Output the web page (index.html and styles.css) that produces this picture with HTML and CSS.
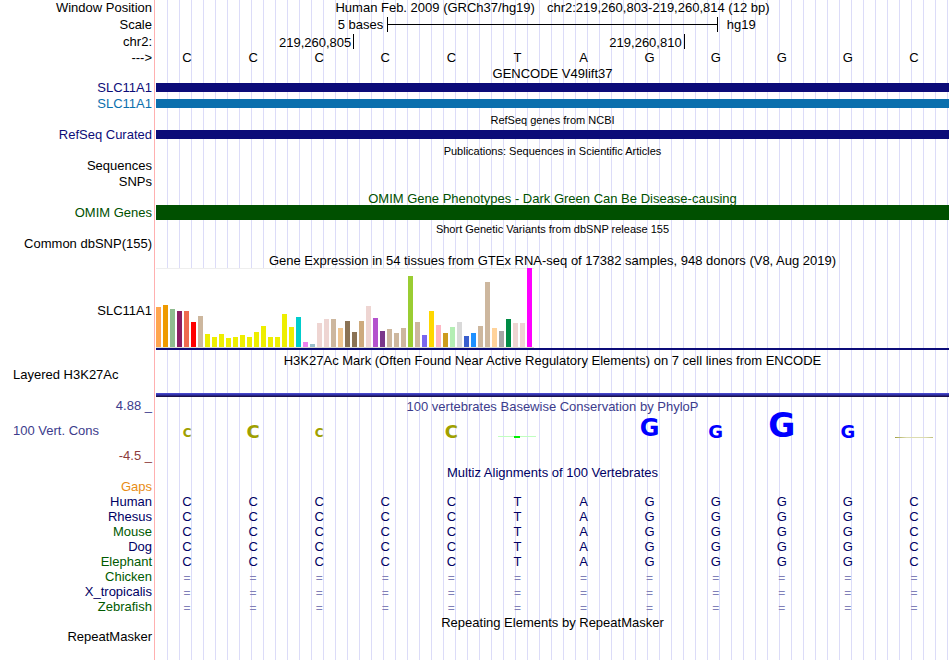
FILE: index.html
```html
<!DOCTYPE html>
<html lang="en">
  <head>
    <meta charset="UTF-8" />
    <meta name="viewport" content="width=device-width, initial-scale=1.0" />
    <title>chr2:219,260,803-219,260,814</title>
    <link rel="stylesheet" href="styles.css" />
  </head>
  <body>
    <main class="browser">
      <!-- Position and ruler -->
      <div class="row">
        <span class="label">Window Position</span>
        <h1 class="position">
          <span>Human Feb. 2009 (GRCh37/hg19)</span>
          <span>chr2:219,260,803-219,260,814 (12 bp)</span>
        </h1>
      </div>
      <div class="row ruler-row">
        <span class="label">Scale</span>
        <div class="scale">
          <span class="scale-size">5 bases</span>
          <span class="scale-bar"></span>
          <span class="scale-db">hg19</span>
        </div>
      </div>
      <div class="row ruler-row">
        <span class="label">chr2:</span>
        <div class="ticks">
          <span class="tick">219,260,805</span>
          <span class="tick">219,260,810</span>
        </div>
      </div>
      <div class="row line-row">
        <span class="label">---&gt;</span>
        <div class="bases" data-seq="CCCCCTAGGGGC"></div>
      </div>

      <!-- Genes -->
      <h2 class="title">GENCODE V49lift37</h2>
      <div class="row navy">
        <span class="label">SLC11A1</span>
        <div class="gene"></div>
      </div>
      <div class="row blue">
        <span class="label">SLC11A1</span>
        <div class="gene"></div>
      </div>
      <h2 class="title small">RefSeq genes from NCBI</h2>
      <div class="row navy">
        <span class="label">RefSeq Curated</span>
        <div class="gene"></div>
      </div>

      <!-- Publications -->
      <h2 class="title small">Publications: Sequences in Scientific Articles</h2>
      <div class="row"><span class="label">Sequences</span></div>
      <div class="row"><span class="label">SNPs</span></div>

      <!-- Phenotypes and variants -->
      <h2 class="title omim">OMIM Gene Phenotypes - Dark Green Can Be Disease-causing</h2>
      <div class="row omim">
        <span class="label">OMIM Genes</span>
        <div class="gene tall"></div>
      </div>
      <h2 class="title small">Short Genetic Variants from dbSNP release 155</h2>
      <div class="row"><span class="label">Common dbSNP(155)</span></div>

      <!-- GTEx expression -->
      <h2 class="title">
        Gene Expression in 54 tissues from GTEx RNA-seq of 17382 samples, 948 donors (V8, Aug 2019)
      </h2>
      <div class="row gtex-row">
        <span class="label">SLC11A1</span>
        <div class="gtex">
          <div class="chart"></div>
        </div>
      </div>

      <!-- Regulation -->
      <h2 class="title">
        H3K27Ac Mark (Often Found Near Active Regulatory Elements) on 7 cell lines from ENCODE
      </h2>
      <div class="row h3k-row">
        <span class="label left">Layered H3K27Ac</span>
        <div class="signal"></div>
      </div>

      <!-- Conservation -->
      <div class="row line-row cons">
        <span class="label">4.88 _</span>
        <h2 class="heading">100 vertebrates Basewise Conservation by PhyloP</h2>
      </div>
      <div class="row logo-row cons">
        <div class="cons-labels">
          <span class="label left">100 Vert. Cons</span>
          <span class="label low">-4.5 _</span>
        </div>
        <div class="logo">
          <span class="c size-1">C</span>
          <span class="c size-2">C</span>
          <span class="c size-1">C</span>
          <span></span>
          <span class="c size-2">C</span>
          <span class="flat-t"></span>
          <span></span>
          <span class="g size-3">G</span>
          <span class="g size-2">G</span>
          <span class="g size-4">G</span>
          <span class="g size-2">G</span>
          <span class="flat-c"></span>
        </div>
      </div>

      <h2 class="title human">Multiz Alignments of 100 Vertebrates</h2>
      <div class="row line-row gaps"><span class="label">Gaps</span></div>
      <div class="row line-row human">
        <span class="label">Human</span>
        <div class="bases" data-seq="CCCCCTAGGGGC"></div>
      </div>
      <div class="row line-row human">
        <span class="label">Rhesus</span>
        <div class="bases" data-seq="CCCCCTAGGGGC"></div>
      </div>
      <div class="row line-row species">
        <span class="label">Mouse</span>
        <div class="bases" data-seq="CCCCCTAGGGGC"></div>
      </div>
      <div class="row line-row human">
        <span class="label">Dog</span>
        <div class="bases" data-seq="CCCCCTAGGGGC"></div>
      </div>
      <div class="row line-row species">
        <span class="label">Elephant</span>
        <div class="bases" data-seq="CCCCCTAGGGGC"></div>
      </div>
      <div class="row line-row species">
        <span class="label">Chicken</span>
        <div class="bases missing" data-seq="============"></div>
      </div>
      <div class="row line-row human">
        <span class="label">X_tropicalis</span>
        <div class="bases missing" data-seq="============"></div>
      </div>
      <div class="row line-row species">
        <span class="label">Zebrafish</span>
        <div class="bases missing" data-seq="============"></div>
      </div>

      <!-- Repeats -->
      <h2 class="title">Repeating Elements by RepeatMasker</h2>
      <div class="row"><span class="label">RepeatMasker</span></div>
    </main>
    <script>
      //Height and color of each tissue bar
      const tissues = [
        [40, "#ffa54f"], [42, "#ee9a00"], [38, "#8fbc8f"], [36, "#8b1c62"],
        [36, "#ee6a50"], [25, "#ff0000"], [31, "#cdb79e"], [13, "#eeee00"],
        [10, "#eeee00"], [13, "#eeee00"], [9, "#eeee00"], [10, "#eeee00"],
        [12, "#eeee00"], [10, "#eeee00"], [15, "#eeee00"], [21, "#eeee00"],
        [10, "#eeee00"], [10, "#eeee00"], [33, "#eeee00"], [20, "#eeee00"],
        [30, "#00cdcd"], [5, "#ee82ee"], [3, "#9ac0cd"], [24, "#eed5d2"],
        [28, "#eed5d2"], [28, "#cdb79e"], [19, "#eec591"], [26, "#8b7355"],
        [15, "#8b7355"], [26, "#cdaa7d"], [41, "#eed5d2"], [29, "#b452cd"],
        [16, "#7a378b"], [18, "#cdb79e"], [14, "#cdb79e"], [19, "#cdb79e"],
        [71, "#9acd32"], [25, "#cdb79e"], [12, "#7a67ee"], [36, "#ffd700"],
        [22, "#ffb6c1"], [14, "#cd9b1d"], [20, "#b4eeb4"], [25, "#d9d9d9"],
        [11, "#3a5fcd"], [14, "#1e90ff"], [21, "#cdb79e"], [65, "#cdb79e"],
        [19, "#ffd39b"], [16, "#a6a6a6"], [28, "#008b45"], [24, "#eed5d2"],
        [24, "#eed5d2"], [79, "#ff00ff"],
      ];

      const chart = document.querySelector(".chart");
      tissues.forEach(([height, color]) => {
        const bar = document.createElement("span");
        bar.style.height = `${height}px`;
        bar.style.backgroundColor = color;
        chart.append(bar);
      });

      //One cell for each base of the sequence
      document.querySelectorAll(".bases").forEach((e) => {
        [...e.dataset.seq].forEach((base) => {
          const cell = document.createElement("span");
          cell.textContent = base;
          e.append(cell);
        });
      });
    </script>
  </body>
</html>
```
FILE: styles.css
```css
* {
  box-sizing: border-box;
}

body {
  margin: 0;
  background-color: #fff;
  color: #000;
  font-family: "Liberation Sans", Arial, sans-serif;
  font-size: 13px;
  line-height: 15px;
}

h1,
h2 {
  margin: 0;
  font-size: 13px;
  font-weight: normal;
}

/* Guide lines run behind all the tracks */
.browser {
  min-height: 100vh;
  margin-right: 1px;
  background-image: linear-gradient(#ffb0b0, #ffb0b0),
    repeating-linear-gradient(
      to right,
      transparent 0,
      transparent 11px,
      #dcdcf8 11px,
      #dcdcf8 12px
    );
  background-position: 154px 0, 156px 0;
  background-size: 1px 100%, 100% 100%;
  background-repeat: no-repeat;
}

.row {
  display: grid;
  grid-template-columns: 156px 1fr;
  grid-template-rows: 100%;
  height: 16px;
  line-height: 16px;
}

.label {
  padding-right: 4px;
  text-align: right;
  white-space: nowrap;
}

.label.left {
  padding-left: 13px;
  text-align: left;
}

.title {
  height: 15px;
  padding-left: 156px;
  line-height: 17px;
  text-align: center;
  white-space: nowrap;
}

.small {
  font-size: 11px;
}

.heading {
  line-height: 17px;
  text-align: center;
}

.line-row {
  height: 15px;
  line-height: 15px;
}

/* Position and ruler */
.position {
  display: flex;
  justify-content: center;
  gap: 12px;
}

.ruler-row {
  height: 17px;
  line-height: 17px;
}

.scale {
  display: grid;
  grid-template-columns: 7fr 10fr 7fr;
}

.scale-size {
  padding-right: 4px;
  text-align: right;
}

.scale-bar {
  height: 15px;
  margin-top: 1px;
  border: solid #000;
  border-width: 0 1px;
  background: linear-gradient(#000, #000) 0 7px / 100% 1px no-repeat;
}

.scale-db {
  padding-left: 9px;
}

.ticks {
  display: grid;
  grid-template-columns: 3fr 5fr 4fr;
}

.tick {
  height: 15px;
  margin-top: 1px;
  padding-right: 2px;
  border-right: 1px solid #000;
  text-align: right;
}

.bases,
.logo {
  display: grid;
  grid-template-columns: repeat(12, 1fr);
  margin: 0 2px 0 -2px;
  text-align: center;
}

/* Genes */
.gene {
  height: 9px;
  margin-top: 3px;
  background-color: currentColor;
}

.gene.tall {
  height: 15px;
  margin-top: 0;
}

.navy {
  color: #0c0c78;
}

.blue {
  color: #0b6fad;
}

.omim {
  color: #005000;
}

/* GTEx bars */
.gtex-row {
  height: 85px;
  line-height: 87px;
}

.gtex {
  margin: 1px 0 2px;
  border-bottom: 2px solid #0c0c78;
}

.chart {
  display: flex;
  align-items: flex-end;
  gap: 2px;
  width: max-content;
  height: 80px;
  padding-right: 2px;
  border-bottom: 1px solid #d8d8d0;
  background-color: #fff;
  box-shadow: inset 0 1px #eee;
}

.chart span {
  width: 5px;
}

.h3k-row {
  height: 31px;
}

.signal {
  align-self: end;
  height: 4px;
  margin-bottom: 1px;
  background-image: linear-gradient(#5050d8, #2c2ca0 50%, #180830);
}

/* Conservation */
.cons {
  color: #3c3c8c;
}

.logo-row {
  height: 51px;
}

.cons-labels {
  display: flex;
  flex-direction: column;
  justify-content: space-between;
  padding-top: 10px;
}

.low {
  color: #8c3c3c;
}

/* Letters stand on the zero line */
.logo {
  align-items: end;
  justify-items: center;
  height: 25px;
  font-family: "DejaVu Sans", sans-serif;
  font-weight: bold;
  line-height: 0.73;
}

.c {
  color: #a0a000;
}

.g {
  color: #0000ff;
}

.size-1 {
  font-size: 12px;
}

.size-2 {
  font-size: 18px;
}

.size-3 {
  font-size: 24px;
}

.size-4 {
  font-size: 33px;
}

.flat-t {
  width: 38px;
  height: 2px;
  background: linear-gradient(#00f000, #00f000) center / 6px 2px no-repeat,
    linear-gradient(#c0ffc0, #c0ffc0) top / 100% 1px no-repeat;
}

.flat-c {
  width: 38px;
  height: 1px;
  background-image: linear-gradient(to right, #a0a040, #dcdcb0 30%, #dcdcb0 80%, #c0c080);
}

/* Alignments */
.gaps {
  color: #e88c14;
}

.human {
  color: #000064;
}

.species {
  color: #005a00;
}

.species .bases {
  color: #000064;
}

.row .missing {
  color: #8080b8;
  font-size: 12px;
  line-height: 19px;
}
```
